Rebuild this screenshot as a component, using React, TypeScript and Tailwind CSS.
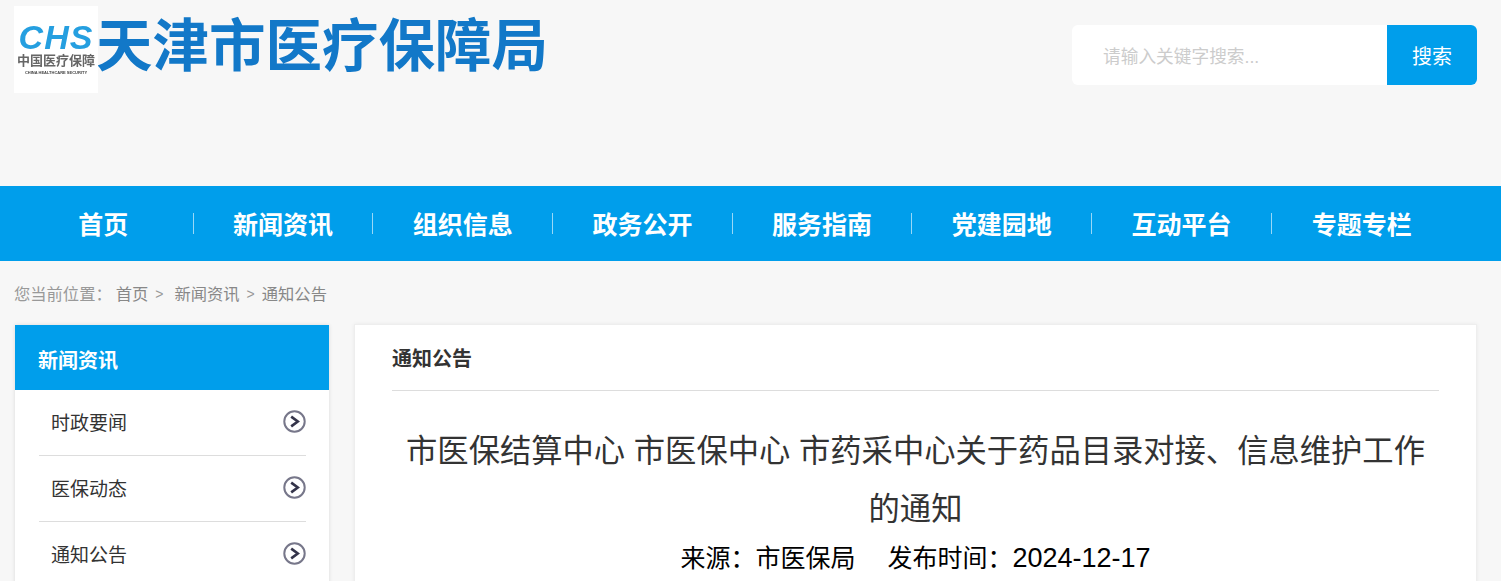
import React from "react";

const font = "font-['Liberation_Sans','Noto_Sans_CJK_SC',sans-serif]";

const navItems = ["首页", "新闻资讯", "组织信息", "政务公开", "服务指南", "党建园地", "互动平台", "专题专栏"];
const sideItems = ["时政要闻", "医保动态", "通知公告"];

const ArrowCircle = () => (
  <svg width="23" height="23" viewBox="0 0 23 23" fill="none" className="shrink-0">
    <circle cx="11.5" cy="11.5" r="10.2" stroke="#77778a" strokeWidth="2" />
    <path d="M8.2 6.6l6.6 4.9-6.6 4.9" stroke="#34344a" strokeWidth="2.6" />
  </svg>
);

const Logo = () => (
  <div className="w-[84px] h-[87px] bg-white shrink-0 flex flex-col items-center pt-[15px] overflow-hidden blur-[0.4px]">
    <div className="text-[34px] leading-[33px] font-bold italic text-[#259fe0] tracking-[1px]">CHS</div>
    <div className="text-[13px] leading-[15px] -mt-[1px] text-[#666] font-bold whitespace-nowrap">中国医疗保障</div>
    <div className="text-[4px] leading-[6px] mt-[2px] text-[#444] font-bold whitespace-nowrap">CHINA HEALTHCARE SECURITY</div>
  </div>
);

export default function App() {
  return (
    <div className={`${font} h-[581px] overflow-hidden bg-[#f7f7f7]`}>
      {/* Header */}
      <header className="h-[186px] pl-[14px] pr-[24px] flex justify-between items-start">
        <div className="flex mt-[6px]">
          <Logo />
          <h1 className="text-[56.5px] leading-[81px] -ml-[2px] font-bold text-[#1278c8] whitespace-nowrap">天津市医疗保障局</h1>
        </div>
        <div className="flex mt-[25px] w-[405px] h-[60px] rounded-[6px] overflow-hidden bg-white">
          <input
            placeholder="请输入关键字搜索..."
            className="flex-1 min-w-0 pl-[31px] pt-[4px] text-[17.7px] outline-none placeholder:text-[#ccc]"
          />
          <button className="w-[90px] pt-[3px] bg-[#009eeb] text-white text-[20px]">搜索</button>
        </div>
      </header>

      {/* Nav */}
      <nav className="h-[75px] bg-[#009eeb] pl-[14px] flex items-center">
        <div className="grid grid-cols-8 w-[1437.5px]">
          {navItems.map((item, index) => (
            <div
              key={item}
              className={`h-[21px] pt-[4px] flex items-center justify-center text-white text-[25px] font-bold ${
                index < navItems.length - 1 ? "border-r border-white/60" : ""
              }`}
            >
              {item}
            </div>
          ))}
        </div>
      </nav>

      {/* Breadcrumb */}
      <div className="h-[64px] pl-[14px] pt-[22px] flex items-start text-[16.3px] leading-[22px] text-[#999] whitespace-nowrap">
        <span className="mr-[4px]">您当前位置：</span>
        <span className="text-[#888]">首页</span>
        <span className="ml-[7px] mr-[11px] text-[14px]">&gt;</span>
        <span className="text-[#888]">新闻资讯</span>
        <span className="mx-[7px] text-[14px]">&gt;</span>
        <span className="text-[#888]">通知公告</span>
      </div>

      {/* Body */}
      <div className="flex items-start pl-[15px] pr-[24px] gap-[25px]">
        <aside className="w-[314px] shrink-0 bg-white shadow-[0_0_4px_rgba(0,0,0,0.12)]">
          <div className="h-[65px] pt-[6px] bg-[#009eeb] pl-[23px] flex items-center text-white text-[20px] font-bold">新闻资讯</div>
          <ul className="pl-[24px] pr-[23px]">
            {sideItems.map((item) => (
              <li key={item} className="h-[66px] border-b border-[#ddd] flex items-center justify-between pl-[12px]">
                <span className="mt-[4px] text-[19px] text-[#333]">{item}</span>
                <span className="-mt-[3px]">
                  <ArrowCircle />
                </span>
              </li>
            ))}
          </ul>
        </aside>

        <main className="flex-1 min-h-[300px] -mt-[1px] bg-white border border-[#eee] shadow-[0_0_4px_rgba(0,0,0,0.06)] px-[37px]">
          <div className="h-[66px] pt-[2px] border-b border-[#ddd] flex items-center text-[20px] font-bold text-[#333]">通知公告</div>
          <h2 className="mt-[32px] px-[6px] text-[31.3px] leading-[58px] text-[#333] text-center">
            市医保结算中心 市医保中心 市药采中心关于药品目录对接、信息维护工作的通知
          </h2>
          <div className="flex justify-center gap-[32px] text-[25px] leading-[38px] text-black">
            <span>来源：市医保局</span>
            <span>
              发布时间：<span className="text-[27px]">2024-12-17</span>
            </span>
          </div>
        </main>
      </div>
    </div>
  );
}
